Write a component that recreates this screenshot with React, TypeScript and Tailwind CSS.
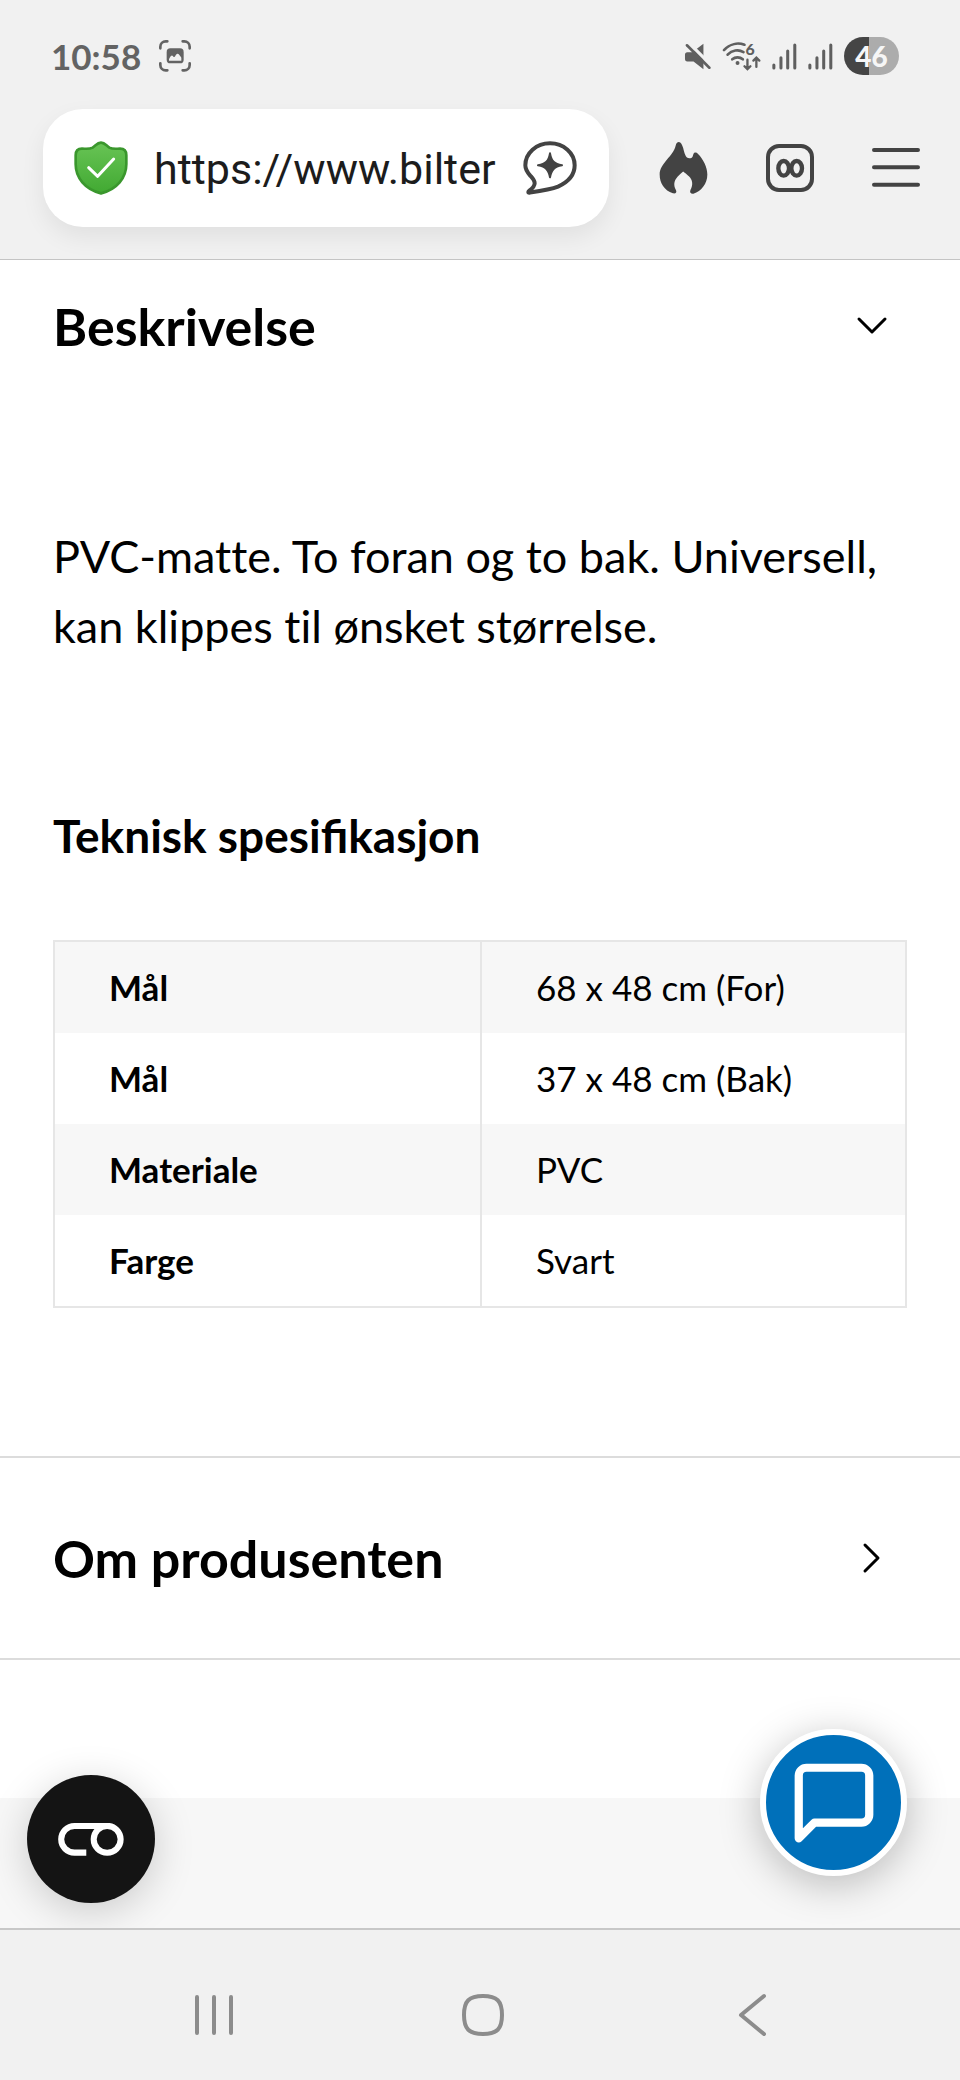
const specs = [
  { label: "Mål", value: "68 x 48 cm (For)" },
  { label: "Mål", value: "37 x 48 cm (Bak)" },
  { label: "Materiale", value: "PVC" },
  { label: "Farge", value: "Svart" },
];

function CaptureIcon() {
  return (
    <svg viewBox="0 0 96 96" className="h-8 w-8" fill="none" stroke="#636363" strokeWidth="8" strokeLinecap="round">
      <path d="M4 25V20A16 16 0 0 1 20 4H25M71 4H76A16 16 0 0 1 92 20V25M92 70V75A16 16 0 0 1 76 91H71M25 91H20A16 16 0 0 1 4 75V70" />
      <rect x="23" y="25" width="51" height="45" rx="11" fill="#636363" stroke="none" />
      <path d="M30 58C33 50 37 46 40 47C43 48 43 52 46 51C49 50 51 40 56 41C61 42 64 49 67 53V62H30Z" fill="#f1f1f1" stroke="none" />
    </svg>
  );
}

function MutedIcon() {
  return (
    <svg viewBox="0 0 80 82" className="h-[27px] w-[27px]" fill="none" strokeLinecap="round">
      <path d="M9 28H24L58 2V80L28 56H9Q2 56 2 48V36Q2 28 9 28Z" fill="#5f5f5f" />
      <path d="M8 -6L82 68" stroke="#f1f1f1" strokeWidth="10" />
      <path d="M8 7L76 75" stroke="#5f5f5f" strokeWidth="8" />
    </svg>
  );
}

function WifiIcon() {
  return (
    <svg viewBox="0 0 118 90" className="h-[30px] w-[39px] overflow-visible" fill="none" stroke="#5f5f5f" strokeWidth="8" strokeLinecap="round">
      <path d="M6 27C24 8 48 4 68 11M17 41C30 27 50 24 65 33M31 55C40 47 54 47 63 55" />
      <circle cx="47" cy="66" r="6" fill="#5f5f5f" stroke="none" />
      <path d="M77 56V84M68 76L77 85L86 76M104 78V51M95 59L104 50L113 59" strokeWidth="7" />
      <text x="71" y="41" fill="#5f5f5f" stroke="none" fontFamily="Lato, sans-serif" fontSize="48" fontWeight="900">
        6
      </text>
    </svg>
  );
}

function SignalIcon() {
  return (
    <svg viewBox="0 0 73 80" className="h-[27px] w-[25px]" stroke="#5f5f5f" strokeWidth="9" strokeLinecap="round">
      <path d="M5 65V74M26 44V74M46 24V74M67 6V74" />
    </svg>
  );
}

function ShieldIcon() {
  return (
    <svg viewBox="0 0 160 162" className="h-[54px] w-[54px] shrink-0" fill="none">
      <defs>
        <linearGradient id="shield" x1="0" y1="0" x2="0" y2="1">
          <stop offset="0" stopColor="#68c455" />
          <stop offset="1" stopColor="#41a932" />
        </linearGradient>
      </defs>
      <path
        d="M80 5C91 5 96 14 105 20C115 25 125 23 137 23C149 23 156 30 156 43V70C156 110 128 145 80 157C32 145 4 110 4 70V43C4 30 11 23 23 23C35 23 45 25 55 20C64 14 69 5 80 5Z"
        fill="url(#shield)"
        stroke="#3a972d"
        strokeWidth="8"
      />
      <path d="M43 80L70 106L118 54" stroke="#fff" strokeWidth="9" strokeLinecap="round" strokeLinejoin="round" />
    </svg>
  );
}

function AskIcon() {
  return (
    <svg viewBox="0 0 160 162" className="h-[54px] w-[54px]" fill="none">
      <path
        d="M80 7C121 7 154 36 154 73C154 103 135 123 104 137C82 146 46 151 18 155C14 155 14 152 18 149C29 141 34 134 34 127C34 117 27 111 20 103C11 93 6 85 6 73C6 36 39 7 80 7Z"
        stroke="#434343"
        strokeWidth="12"
        strokeLinejoin="round"
      />
      <path
        d="M80 37C84 60 93 69 116 73C93 77 84 86 80 109C76 86 67 77 44 73C67 69 76 60 80 37Z"
        fill="#434343"
        stroke="#434343"
        strokeWidth="6"
        strokeLinejoin="round"
      />
    </svg>
  );
}

function FireIcon() {
  return (
    <svg viewBox="0 0 148 157" className="h-[52px] w-[49px]" fill="#434343">
      <path d="M60 0C66 0 70 8 73 18C77 34 80 49 92 49C102 49 102 42 104 36C107 30 113 30 118 36C134 52 146 76 146 98C146 126 128 148 104 156C96 157 92 152 95 145C104 128 101 114 91 104C84 97 77 93 73 89C69 93 62 98 56 105C44 118 44 132 51 145C55 152 50 157 42 155C16 146 2 124 2 98C2 64 44 42 50 12C52 3 56 0 60 0Z" />
    </svg>
  );
}

function TabsIcon() {
  return (
    <svg viewBox="0 0 144 144" className="h-12 w-12" fill="none" stroke="#434343">
      <rect x="6" y="6" width="132" height="132" rx="33" strokeWidth="12" />
      <ellipse cx="53" cy="73" rx="16" ry="22" strokeWidth="13" />
      <ellipse cx="92" cy="73" rx="16" ry="22" strokeWidth="13" />
    </svg>
  );
}

function MenuIcon() {
  return (
    <svg viewBox="0 0 144 144" className="h-12 w-12" stroke="#434343" strokeWidth="12" strokeLinecap="round">
      <path d="M6 18H138M6 70H138M6 122H138" />
    </svg>
  );
}

function StatusBar() {
  return (
    <div className="flex h-[38px] items-center justify-between pl-2 pr-[21px]">
      <div className="flex items-center gap-[18px]">
        <span className="text-[35px] font-bold leading-[38px] text-[#636363]">10:58</span>
        <CaptureIcon />
      </div>
      <div className="flex items-center gap-[11px]">
        <MutedIcon />
        <WifiIcon />
        <SignalIcon />
        <SignalIcon />
        <span className="flex h-[38px] w-[55px] items-center justify-center rounded-full bg-linear-to-r from-[#454545] from-46% to-[#acacac] to-46% text-[28px] font-black leading-[38px] text-[#f6f6f6]">
          46
        </span>
      </div>
    </div>
  );
}

function AddressBar() {
  return (
    <div className="mt-[34px] flex items-center">
      <div className="flex h-[118px] min-w-0 flex-1 items-center rounded-[40px] bg-white pl-[31px] pr-8 shadow-[0_10px_24px_rgba(0,0,0,0.07)]">
        <ShieldIcon />
        <input
          type="url"
          aria-label="Adresse"
          defaultValue="https://www.bilter"
          className="ml-[26px] mr-4 min-w-0 flex-1 bg-transparent pt-[2px] font-[Roboto,sans-serif] text-[43px] leading-[54px] text-[#1c1c1c] outline-none"
        />
        <button type="button" aria-label="Spør">
          <AskIcon />
        </button>
      </div>
      <div className="ml-[50px] flex items-center gap-[58px]">
        <button type="button" aria-label="Slett data">
          <FireIcon />
        </button>
        <button type="button" aria-label="Faner">
          <TabsIcon />
        </button>
        <button type="button" aria-label="Meny">
          <MenuIcon />
        </button>
      </div>
    </div>
  );
}

function SpecTable() {
  return (
    <table className="mt-[74px] w-full table-fixed border-separate border-spacing-0 border-2 border-[#e6e6e6] text-[35px] leading-[43px]">
      <tbody>
        {specs.map(({ label, value }, i) => (
          <tr key={i} className="odd:bg-[#f7f7f7]">
            <th scope="row" className="py-6 pl-[54px] text-left font-bold">
              {label}
            </th>
            <td className="border-l-2 border-[#e6e6e6] py-6 pl-[54px]">{value}</td>
          </tr>
        ))}
      </tbody>
    </table>
  );
}

export default function App() {
  return (
    <div lang="nb" className="flex min-h-screen flex-col bg-white font-[Lato,sans-serif] text-black">
      <header className="border-b border-[#c4c4c4] bg-[#f1f1f1] pb-8 pl-[43px] pr-10 pt-[37px]">
        <StatusBar />
        <AddressBar />
      </header>

      <main className="relative flex flex-1 flex-col">
        <section className="px-[53px] pb-[148px] pt-9">
          <h2>
            <button type="button" aria-expanded="true" className="flex w-full items-center justify-between pr-[19px] text-left text-[52px] font-bold leading-[60px]">
              Beskrivelse
              <svg viewBox="0 0 32 32" className="h-8 w-8" fill="none" stroke="#000" strokeWidth="3" strokeLinecap="round" strokeLinejoin="round">
                <path d="M3 9L16 22L29 9" />
              </svg>
            </button>
          </h2>
          <p className="mt-[165px] text-[45px] leading-[70px] [font-variant-ligatures:none]">
            PVC-matte. To foran og to bak. Universell, kan klippes til ønsket størrelse.
          </p>
          <h3 className="mt-[145px] text-[46px] font-bold leading-[60px]">Teknisk spesifikasjon</h3>
          <SpecTable />
        </section>

        <section className="border-y-2 border-[#dcdcdc] px-[53px] py-[70px]">
          <h2>
            <button type="button" aria-expanded="false" className="flex w-full items-center justify-between pr-[19px] text-left text-[52px] font-bold leading-[60px]">
              Om produsenten
              <svg viewBox="0 0 32 32" className="h-8 w-8" fill="none" stroke="#000" strokeWidth="3" strokeLinecap="round" strokeLinejoin="round">
                <path d="M9 3L22 16L9 29" />
              </svg>
            </button>
          </h2>
        </section>

        <div className="mt-[138px] min-h-32 flex-1 bg-[#f7f7f7]" />

        <button
          type="button"
          aria-label="Informasjonskapsler"
          className="absolute bottom-[25px] left-[27px] flex h-32 w-32 items-center justify-center rounded-full bg-[#141414] shadow-[0_8px_40px_rgba(0,0,0,0.18)]"
        >
          <svg viewBox="0 0 196 98" className="h-[33px] w-[66px]" fill="none" stroke="#fff" strokeWidth="18">
            <path d="M84 88H49A39.5 39.5 0 0 1 49 9H147" />
            <circle cx="146" cy="48.5" r="40" />
          </svg>
        </button>
        <button
          type="button"
          aria-label="Chat"
          className="absolute bottom-[52px] right-[53px] flex h-[147px] w-[147px] items-center justify-center rounded-full border-[6px] border-white bg-[#0070ba] text-white shadow-[0_8px_40px_rgba(0,0,0,0.25)]"
        >
          <svg viewBox="0 0 24 24" className="h-[94px] w-[94px]" fill="none" stroke="currentColor" strokeWidth="2.1" strokeLinecap="round" strokeLinejoin="round">
            <path d="M21 15a2 2 0 0 1-2 2H7l-4 4V5a2 2 0 0 1 2-2h14a2 2 0 0 1 2 2z" />
          </svg>
        </button>
      </main>

      <nav className="relative grid h-[152px] grid-cols-3 items-center justify-items-center border-t-2 border-[#c8c8c8] bg-[#f1f1f1] pl-20 pr-[74px] pt-5">
        <button type="button" aria-label="Siste apper">
          <svg viewBox="0 0 44 44" className="h-11 w-11" stroke="#8c8c8c" strokeWidth="4" strokeLinecap="round">
            <path d="M5 4V40M22 4V40M39 4V40" />
          </svg>
        </button>
        <button type="button" aria-label="Hjem">
          <svg viewBox="0 0 44 44" className="h-11 w-11" fill="none" stroke="#8c8c8c" strokeWidth="4">
            <path d="M22 3C36 3 41 8 41 22C41 36 36 41 22 41C8 41 3 36 3 22C3 8 8 3 22 3Z" />
          </svg>
        </button>
        <button type="button" aria-label="Tilbake">
          <svg viewBox="0 0 44 44" className="h-11 w-11" fill="none" stroke="#8c8c8c" strokeWidth="4" strokeLinecap="round" strokeLinejoin="round">
            <path d="M34 3L11 22L34 41" />
          </svg>
        </button>
      </nav>
    </div>
  );
}
